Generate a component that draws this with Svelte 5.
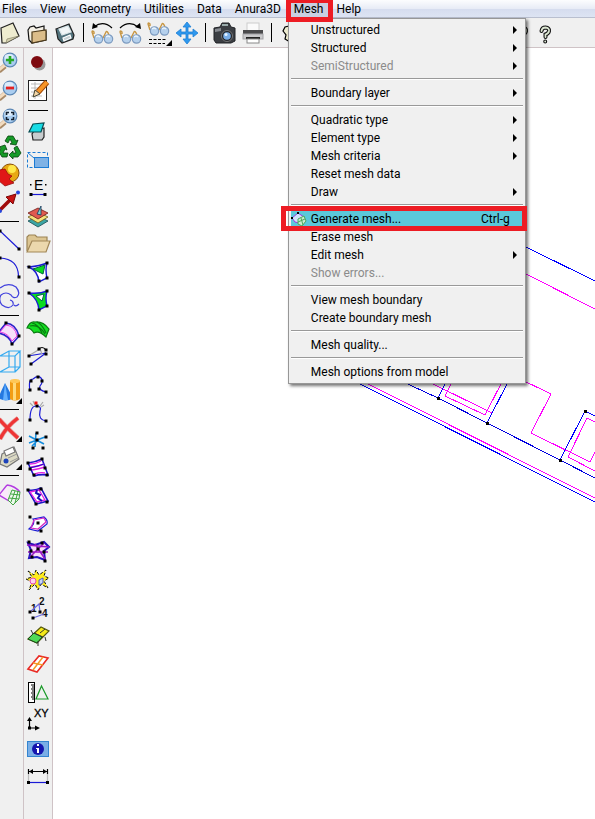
<script>
  const k = '#000';
  const b = '#1a1ad6';
  const dot = (x, y, c = k) => `<rect x="${x - 1.5}" y="${y - 1.5}" width="3" height="3" fill="${c}"/>`;
  const dots = (...pts) => pts.map(([x, y]) => dot(x, y)).join('');
  const path = (d, stroke, fill = 'none', w = 1.2) =>
    `<path d="${d}" stroke="${stroke}" fill="${fill}" stroke-width="${w}"/>`;
  const corner = `<path d="M27 21V27H21Z" fill="#000"/>`;
  const lens = (inner) =>
    path('M10 17L4 22', '#a98a67', 'none', 5) +
    path('M10 16L4 21', '#f3dcc0', 'none', 3) +
    `<circle cx="15" cy="11" r="6.8" fill="#a9cdf0" stroke="#5d88b5" stroke-width="1.2"/><ellipse cx="14" cy="8" rx="4.5" ry="3" fill="#dcecfb"/>` +
    inner;
  const glasses =
    path('M5 19L3 13Q3 11 5 13V15M14 19L17 13Q18 11 20 16', '#c79643', 'none', 1.4) +
    `<circle cx="9.500" cy="20" r="4.200" fill="#b5d0ec" stroke="#7d9bc0" stroke-width="1.200"/><circle cx="19.500" cy="20" r="4.200" fill="#b5d0ec" stroke="#7d9bc0" stroke-width="1.200"/>` +
    path('M7 18Q9 16 11 18M17 18Q19 16 21 18', '#e9f4fe');

  const file = [
    ['New', path('M6 9L18 4L24 17L11 24L7 24Z', '#222', '#eeecd0') + path('M11 24L12 20L24 17Z', '#77745c', '#d4d1ae', 0.6)],
    ['Open', path('M5 11L7 8L11 7L13 9L21 7V11L23 12V21L9 24L6 21Z', '#111', '#f3efe4') + path('M9 13L23 11V21L9 24Z', '#4f3c1c', '#dbbd8a')],
    ['Save', path('M5 10L18 5L23 16L22 20L11 24L7 20Z', '#222', '#52737d') + path('M8 10L17 7L20 13L11 16Z', '#dfe8ea', '#f2f6f7') + path('M12 19L19 16L20 19L13 22Z', '#fff', '#c7d1d4')]
  ];
  const view = [
    ['Previous view', glasses + path('M5 8Q14 1 23 9', k) + `<path d="M3 10L4 4L9 8Z"/>`],
    ['Next view', glasses + path('M3 9Q12 1 21 8', k) + `<path d="M24 10L23 4L18 8Z"/>`],
    ['View list', `<g transform="translate(0 -8)">${glasses}</g>` + `<path d="M4 20.500H22M4 24.500H20" stroke="#000" stroke-width="1.200" stroke-dasharray="3 1.500"/>` + corner],
    ['Pan', `<path d="M14 3L18 8H15V13H20V10L25 14L20 18V15H15V20H18L14 25L10 20H13V15H8V18L3 14L8 10V13H13V8H10Z" fill="#2e98ee" stroke="#1d7fd4" stroke-width=".8"/>`]
  ];
  const output = [
    ['Snapshot', `<path d="M3 9L9 8L11 4H18L20 8L24 9V22L20 24H5L3 21Z" fill="#3b3e43" stroke="#202226"/><path d="M4 10L10 9V12L4 13Z" fill="#868a90"/><rect x="11" y="5" width="6" height="2" fill="#9aa"/><circle cx="16" cy="17" r="5.500" fill="#20242a" stroke="#777"/><circle cx="16" cy="17" r="3.800" fill="#79aee8"/><circle cx="15" cy="15.500" r="1.500" fill="#e5f2ff"/>`],
    ['Print', `<rect x="8" y="4" width="12" height="9" fill="#fafafa" stroke="#ccc"/><path d="M4 11H24V16H4Z" fill="#4a4a4c"/><rect x="4" y="15" width="20" height="5" fill="#c9c9cb" stroke="#a2a2a6"/><path d="M7 19H21" stroke="#222" stroke-width="2"/><rect x="8" y="20" width="12" height="4" fill="#fff" stroke="#888"/>`]
  ];
  const prefs = [['Preferences', path('M12 7L8 8L6 12L9 16L8 20L13 23', k, '#eeecd0')]];
  const question = (x) =>
    `<g transform="translate(${x} 0)" fill="none" stroke-linecap="round"><path d="M10.500 12Q11 8.500 14.500 8.500Q18.500 9 18 12Q17.500 14.500 14.500 15.500V18M14.200 22.500V22.600" stroke="#111" stroke-width="4"/><path d="M10.500 12Q11 8.500 14.500 8.500Q18.500 9 18 12Q17.500 14.500 14.500 15.500V18M14.200 22.500V22.600" stroke="#dbe6d2" stroke-width="1.800"/></g>`;
  const help = [
    ['Context help', question(5)],
    ['Help', question(0)]
  ];

  const left = [
    [
      ['Zoom in', lens(path('M15 7V15M11 11H19', '#27a827', 'none', 2.6))],
      ['Zoom out', lens(path('M11 11H19', '#e32222', 'none', 2.8))],
      ['Zoom frame', lens(path('M11.5 10V7.500H14M16 7.500H18.500V10M18.500 12V14.500H16M14 14.500H11.500V12', '#13202f', 'none', 1.6))],
      ['Redraw', `<g fill="#159a27" stroke="#07420d" stroke-width=".8"><path d="M10 8L13 3H18L21 8L23 7L21 12L15 11L17 10L15 6L13 10Z"/><path d="M22 13L26 20L23 24H18V26L14 22L18 18V20H21L19 15Z"/><path d="M12 24H7L4 19L6 15L4 14L10 12L12 17L10 16L8 20H13Z"/></g>`],
      ['Render', `<circle cx="15" cy="12" r="9" fill="#e8a913" stroke="#8a5008"/><circle cx="17" cy="8" r="4" fill="#ffe84a"/><path d="M4 9L10 8L13 13L17 15L14 18L19 22L10 25L4 20Z" fill="#e01717" stroke="#8e0808" stroke-width=".7"/>`],
      ['Rotate', path('M5 21L16 10', '#a00b0b', 'none', 3.5) + `<path d="M21 5L18 15L11 8Z" fill="#c81414" stroke="#7a0606"/><circle cx="23" cy="3.500" r="2" fill="#2746dc"/><circle cx="5" cy="22" r="2" fill="#2746dc"/>`]
    ],
    [
      ['Line', path('M5 4L24 22', b) + dots([5, 4], [24, 22])],
      ['Arc', path('M5 3Q23 4 23.500 21', b) + dots([5, 3], [24, 22])],
      ['Curve', path('M5 5Q13 -1 21 4Q26 10 22 14Q18 16 16 12Q11 8 6 12Q3 17 7 22Q14 27 18 22Q19 18 15 17M19 22Q21 24 24 21', '#4141dd')]
    ],
    [
      ['Surface', path('M11 2Q21 3 24 15L17 23Q14 14 3 12Z', '#2b21c9', '#f7dffa', 1.6) + path('M11 4Q20 5 22 15L17 20Q13 12 5 11Z', '#ea3fe4', 'none', 1) + dots([11, 2], [24, 15], [17, 23])],
      ['Volume', path('M5 7L14 2H25L20 7H5M5 23H20V7M20 23L25 18V2M14 2V18H25M14 18L5 23', '#35aaf0')],
      ['Object', `<path d="M10 6L18 21Q11 26 3 21Z" fill="#2478e0"/><path d="M10 6L13 23H8Z" fill="#63b0ff"/><path d="M15 4Q20 1 25 4V22Q20 25 15 22Z" fill="#f29d14"/><path d="M18 5H21V23H18Z" fill="#ffd978"/><ellipse cx="20" cy="4" rx="5" ry="2" fill="#ffc857"/>` + corner]
    ],
    [
      ['Delete', path('M4 4Q11 12 23 23M23 3Q11 12 5 24', '#e79a9a', 'none', 4.6) + path('M4 4Q11 12 23 23M23 3Q11 12 5 24', '#ee3434', 'none', 3.2) + corner],
      ['List', path('M7 11L19 4L24 16L12 24L5 21Z', '#777', '#dcdac4') + path('M9 8L18 4L20 9L11 13Z', '#777', '#fff') + path('M13 15L22 11M15 19L23 15', '#999', 'none', 1) + `<circle cx="11" cy="18" r="2.500" fill="#1d43bb"/>` + corner]
    ],
    [['Mesh', path('M12 4L4 14L14 20M12 4Q20 5 25 11', '#b23be0', '#fae9fb', 1.4) + path('M17 9L25 11L24 18L18 24L13 19ZM20 10L16 21M23 10L20 22M16 13L25 14M14 17L24 18', '#42a542', '#eef8ee', 1)]]
  ];

  const right = [
    [
      ['Stop', `<circle cx="15.500" cy="15.500" r="6" fill="#999"/><circle cx="13" cy="13" r="6" fill="#7d0a0f"/>`],
      ['Edit notes', `<rect x="4.500" y="3.500" width="18" height="20" fill="#fff" stroke="#222"/>` + path('M7 7H20M7 11H20M7 15H18M7 19H18M11 5V22', '#aaa', 'none', 0.8) + path('M23 5L14 15', '#a34b08', 'none', 6) + path('M23 5L14 15', '#f79425', 'none', 4) + `<path d="M16 17L11 13L9 20Z" fill="#f3d6a6" stroke="#443"/>`]
    ],
    [
      ['Erase', path('M10 14L20 11V20L18 23L9 23L8 17Z', '#222', '#c8ccce') + path('M9 7L20 6L17 15H5Z', '#064c52', '#18dbe4')],
      ['Select region', `<rect x="3.500" y="7.500" width="20" height="15" fill="none" stroke="#1b7bd4" stroke-dasharray="3 2"/><path d="M4 8L10 13" stroke="#1b7bd4"/><rect x="10.500" y="12.500" width="14" height="10" fill="#7fb2e5" stroke="#1b7bd4"/>`],
      ['Edge length', `<text x="10" y="17" font-family="Liberation Sans, sans-serif" font-size="14" fill="#000">E</text>` + path('M7 21.500H21', b) + dots([7, 21.5], [21, 21.5]) + `<path d="M6 11h1.500v1.500H6zM21 11h1.500v1.500H21z"/>`],
      ['Layers', path('M4 20L14 15L24 20L14 26Z', '#174a50', '#3ca5a4', 0.8) + path('M4 16L14 11L24 16L14 22Z', '#6d5818', '#f5e37d', 0.8) + path('M4 12L14 7L24 12L14 18Z', '#6f1c18', '#df5a50', 0.8) + path('M13 13L17 5V14Z', '#135', '#7fd0cf', 0.8)],
      ['Folder', path('M3 22V8L5 6H11L13 8H23V12', '#9b8355', '#dcc592') + path('M3 23L8 12H26L22 23Z', '#a18758', '#ecd8ad')],
      ['Surface by contour', path('M5 10Q16 9 23 6Q21 13 23 21L15 25Q14 14 5 10Z', b, '#fff', 1.4) + `<path d="M9 12L21 8L19 17Z" fill="#0bdc20" stroke="#064"/>` + dots([5, 10], [23, 6], [23, 21], [15, 24])],
      ['Trimmed surface', path('M5 8Q16 9 23 6Q21 13 23 21L15 25Q14 14 5 8Z', b, '#0bdc20', 1.4) + `<path d="M12 11L20 9L18 16Z" fill="#fff" stroke="#064"/>` + dots([5, 8], [23, 6], [23, 21], [15, 25])],
      ['Parallel surface', path('M3 15Q6 8 11 9Q19 8 25 16L22 24Q15 17 10 20Q7 15 3 15Z', '#087a10', '#14df22') + path('M8 10Q14 11 18 20M13 9Q18 11 22 20M6 13Q15 11 21 21', '#087a10')],
      ['Move point', path('M4 15L22 12L7 23', b) + path('M6 14L16 8L18 13', '#aaa') + path('M14 9Q18 4 22 9', k) + dots([5, 15], [22, 13], [7, 23], [15, 8], [22, 9])],
      ['Edit polyline', path('M6 22Q4 10 9 10Q14 6 17 9Q20 12 16 17Q14 21 22 23', b) + dots([6, 21], [7, 12], [14, 8], [18, 12], [15, 20], [22, 23])],
      ['Edit spline', path('M6 23Q6 9 12 9Q18 9 16 14Q14 23 22 24', b) + path('M6 6L9 9M9 4L11 8M19 5L16 9M20 8L17 10', '#aaa') + dots([6, 23], [13, 9], [22, 24]) + dot(12, 6, '#ef1111')],
      ['Divide', path('M5 11L20 19M5 18L21 12M12 8L11 22M14 15L8 21', '#168ddd', 'none', 1.6) + dots([13, 8], [9, 23], [22, 12], [19, 23], [13, 15])],
      ['Structured strip', path('M4 10Q12 9 18 6L24 22Q16 21 10 23Z', '#1c14c8', '#fff', 1.6) + path('M6 11Q12 11 17 8M7 14Q14 14 20 11M8 17Q15 16 21 14M11 21Q16 19 21 20', '#e31fe0', 'none', 1.4) + path('M6 15Q14 13 20 11', '#1c14c8', 'none', 1.2) + dots([4, 10], [18, 6], [6, 16], [21, 15], [10, 22], [23, 22])],
      ['Split surface', path('M4 9Q12 10 17 7L24 20L12 23Z', '#1c14c8', '#fff', 1.6) + path('M6 11L15 9L21 19L13 21Z', '#e31fe0', 'none', 1.3) + path('M13 9L12 12L16 14L14 17L18 20', '#1910bb', 'none', 2) + dots([4, 9], [17, 8], [12, 23], [23, 21])],
      ['Join surfaces', path('M9 10L20 8Q24 11 23 15L14 22L5 20Q12 14 9 10Z', b, '#fff') + path('M10 11L20 9L22 13L14 20L7 19Z', '#d428c4') + dots([6, 8], [14, 14], [17, 22])],
      ['Intersect surfaces', path('M4 6L11 8L20 5L25 10L20 14L21 23L13 20L5 21L7 13Z', '#2413bc', '#f8dcf7', 2) + path('M3 8L25 10M6 20L20 6M11 7L21 22M4 15L24 15', '#9b17c5', 'none', 1.5) + dots([5, 5], [18, 6], [7, 14], [14, 12], [20, 15], [8, 20], [21, 24])],
      ['Explode', `<path d="M4 6L10 10L12 5L15 10L22 5L20 11L25 13L20 16L24 23L17 19L14 25L11 19L5 25L8 17L2 14L8 12Z" fill="#ffec1c" stroke="#111" stroke-dasharray="3 2"/><circle cx="9" cy="16" r="3" fill="#ffd1ee" stroke="#e341b5"/><path d="M15 15L19 13V18L15 20Z" fill="#c9d5f5" stroke="#4b59c9"/>`],
      ['Numbering', `<g font-family="Liberation Sans, sans-serif" font-weight="bold" font-size="10" fill="#111"><text x="15" y="12">2</text><text x="7" y="19">1</text><text x="18" y="24">4</text></g>` + path('M6 19L15 11L16 19M9 25L20 21', '#6a6ae6') + dots([6, 19], [16, 19], [9, 25])],
      ['Normals', path('M4 18L17 6L25 10L13 22Z', '#55590c', '#f5ea18') + `<path d="M4 18L10 12L18 16L13 22Z" fill="#4fd957" stroke="#174b1a"/>` + path('M10 12L19 16M21 8L16 12M9 13L7 9M14 20V25M21 16L22 20', '#333', 'none', 1)],
      ['Element plane', path('M4 20L15 7L24 9L13 23Z', '#e92b25', '#fff', 1.6) + path('M9 14L19 16M9 21L19 8', '#f39b28', 'none', 1.5)],
      ['Measure', `<rect x="4.500" y="5.500" width="6" height="20" fill="#fff" stroke="#000"/>` + path('M7 8H10M8 10H10M7 12H10M8 14H10M7 16H10M8 18H10M7 20H10M8 22H10', k) + path('M17.500 9L24 22H12Z', '#1a9a28')],
      ['Coordinates', `<text x="10" y="12" font-family="Liberation Sans, sans-serif" font-size="11" fill="#000" stroke="#000" stroke-width=".3">XY</text>` + path('M5.500 14V23H12', k) + `<path d="M3 16L5.500 12L8 16ZM11 20.500L16 23L11 25.500Z"/>` + dot(5.5, 23)],
      ['Information', `<rect x="3.500" y="8.500" width="21" height="15" fill="#7aaee6" stroke="#3484d0"/><circle cx="14" cy="16" r="6" fill="#1515ae"/><path d="M13 11h2v2h-2zM12 15h3v5h-2v-4h-1z" fill="#fff"/>`],
      ['Dimension', path('M5 10.500H23M4.500 8V13M23.500 8V13', k) + `<path d="M5 10.500L9 8V13ZM23 10.500L19 8V13Z"/>` + path('M4.500 13V20M23.500 13V20', '#bbb') + path('M5 21.500H23', b) + dots([4.5, 21.5], [23.5, 21.5])]
    ]
  ];

  const before = ['Files', 'View', 'Geometry', 'Utilities', 'Data', 'Anura3D'];
  const meshMenu = [
    [
      { label: 'Unstructured', sub: true },
      { label: 'Structured', sub: true },
      { label: 'SemiStructured', sub: true, off: true }
    ],
    [{ label: 'Boundary layer', sub: true }],
    [
      { label: 'Quadratic type', sub: true },
      { label: 'Element type', sub: true },
      { label: 'Mesh criteria', sub: true },
      { label: 'Reset mesh data' },
      { label: 'Draw', sub: true }
    ],
    [
      { label: 'Generate mesh...', keys: 'Ctrl-g', active: true },
      { label: 'Erase mesh' },
      { label: 'Edit mesh', sub: true },
      { label: 'Show errors...', off: true }
    ],
    [{ label: 'View mesh boundary' }, { label: 'Create boundary mesh' }],
    [{ label: 'Mesh quality...' }],
    [{ label: 'Mesh options from model' }]
  ];
  const nodes = [[438, 398], [487, 423], [560, 460], [585, 411]];
</script>

{#snippet tools(list)}
  {#each list as [name, art]}
    <button class="tool" aria-label={name} title={name}>
      <svg viewBox="0 0 28 28" aria-hidden="true">{@html art}</svg>
    </button>
  {/each}
{/snippet}

{#snippet groups(all)}
  {#each all as list, i}
    {#if i > 0}<hr />{/if}
    {@render tools(list)}
  {/each}
{/snippet}

<div class="app">
  <nav class="menubar" aria-label="Main menu">
    {#each before as name}
      <button class="top">{name}</button>
    {/each}
    <div class="open">
      <button class="top pressed" aria-expanded="true">Mesh</button>
      <div class="menu" role="menu">
        {#each meshMenu as group, i}
          {#if i > 0}<hr />{/if}
          {#each group as item}
            <button class="item" class:active={item.active} role="menuitem" disabled={item.off}>
              {#if item.active}
                <svg class="mini" viewBox="0 0 16 16" aria-hidden="true">
                  <path d="M1 7L7 2L13 6L8 12L4 11Z" fill="#cfe2fb" stroke="#9a3be0" />
                  <path d="M7 8L13 5L15 10L11 15L7 13ZM10 7L12 14M7 11L14 8" fill="#c9ecd0" stroke="#4aa95a" />
                  <path d="M0 6h2v2h-2zM6 1h2v2h-2z" />
                </svg>
              {/if}
              <span>{item.label}</span>
              {#if item.keys}<kbd>{item.keys}</kbd>{/if}
              {#if item.sub}
                <svg class="arrow" viewBox="0 0 4 8" aria-hidden="true"><path d="M0 0L4 4L0 8Z" /></svg>
              {/if}
              {#if item.active}<i class="mark"></i>{/if}
            </button>
          {/each}
        {/each}
      </div>
      <i class="mark"></i>
    </div>
    <button class="top">Help</button>
  </nav>

  <div class="toolbar" role="toolbar" aria-label="Standard">
    {@render groups([file, view, output, prefs])}
    <div class="helpers">{@render tools(help)}</div>
  </div>

  <div class="work">
    <div class="column first" role="toolbar" aria-label="View and create">{@render groups(left)}</div>
    <div class="column" role="toolbar" aria-label="Geometry tools">{@render groups(right)}</div>
    <main>
      <svg class="drawing" role="img" aria-label="Model geometry">
        <g transform="translate(-53 -48)" fill="none" shape-rendering="crispEdges">
          <g stroke="#f0f">
            <path d="M526 274L595 309M360 380L595 498M427 381L492 413" />
            <path d="M453 380L445 396L485 415L503 380" />
            <path d="M520 379L551 394L531 433L590 462L595 452" />
            <path d="M595 422L587 418L568 457L595 471" />
          </g>
          <g stroke="#00f">
            <path d="M526 247L595 281M352 380L595 502M447 380L438 398M509 380L487 423M560 460L585 411L595 416" />
            <path d="M399 380L438 398L487 423L560 460L595 478" stroke="#0000e0" />
          </g>
          {#each nodes as [x, y]}
            <rect x={x - 1} y={y - 1} width="3" height="3" fill="#000" />
          {/each}
        </g>
      </svg>
    </main>
  </div>
</div>

<style>
  :global(body) {
    margin: 0;
    overflow-x: hidden;
  }
  .app {
    min-height: 100vh;
    display: flex;
    flex-direction: column;
    overflow: hidden;
    background: #f0f0f0;
    color: #000;
    font: 12px/18px Roboto, 'Segoe UI', sans-serif;
  }
  button {
    margin: 0;
    border: 0;
    background: none;
    font: inherit;
    color: inherit;
    text-align: left;
  }
  .menubar {
    display: flex;
    height: 17px;
    margin-left: -4px;
    border-bottom: 1px solid #b9bfcf;
    background: linear-gradient(#fcfdfe, #e8ecf6 50%, #d5dcee 51%, #dde4f3);
  }
  .top {
    height: 17px;
    padding: 0 7px 0 6px;
    white-space: nowrap;
  }
  .open {
    position: relative;
  }
  .pressed {
    background: #c9d0e2;
  }
  .mark {
    position: absolute;
    z-index: 3;
    inset: -2px -3px -5px -2px;
    border: 5px solid #ed1c24;
    pointer-events: none;
  }
  .menu {
    position: absolute;
    z-index: 2;
    top: 18px;
    left: 0;
    width: 232px;
    padding: 2px;
    border: 1px solid #979797;
    background: #f0f0f0;
    box-shadow: 2px 2px 3px rgba(0, 0, 0, 0.55);
  }
  .item {
    position: relative;
    display: flex;
    align-items: center;
    width: 100%;
    height: 18px;
    padding: 0 6px 0 20px;
    white-space: nowrap;
  }
  .item span {
    flex: 1;
  }
  .item:disabled {
    color: #8b8b8b;
  }
  .active {
    background: #5bc8da;
  }
  .active .mark {
    inset: -4px -4px -3px -10px;
  }
  .mini {
    position: absolute;
    left: 0;
    top: 1px;
    width: 16px;
    height: 16px;
  }
  kbd {
    margin-right: 7px;
    font: inherit;
  }
  .arrow {
    width: 4px;
    height: 8px;
  }
  hr {
    flex: none;
    border: 0;
    margin: 0;
  }
  .menu hr {
    height: 1px;
    margin: 3px 0 4px;
    border-top: 1px solid #999;
    background: #fff;
  }
  .toolbar {
    display: flex;
    height: 29px;
    align-items: center;
    margin-left: -5px;
    border-bottom: 1px solid #cfc3c6;
  }
  .toolbar hr {
    width: 1px;
    height: 19px;
    margin: 0 5px 0 4px;
    background: #000;
  }
  .helpers {
    display: flex;
    margin-left: 198px;
  }
  .tool {
    flex: none;
    display: block;
    width: 28px;
    height: 28px;
    padding: 0;
  }
  .tool svg {
    display: block;
    width: 28px;
    height: 28px;
  }
  .work {
    flex: 1;
    display: flex;
  }
  .column {
    flex: none;
    width: 28px;
    padding-top: 1px;
    border-right: 1px solid #cfc3c6;
  }
  .first {
    margin-left: -5px;
  }
  .column hr {
    width: 20px;
    height: 1px;
    margin: 5px 4px 6px;
    background: #000;
  }
  .first hr {
    margin: 4px 4px 5px;
  }
  main {
    flex: 1;
    min-width: 0;
    display: flex;
    background: #fff;
  }
  .drawing {
    flex: 1;
    width: 100%;
  }
</style>
